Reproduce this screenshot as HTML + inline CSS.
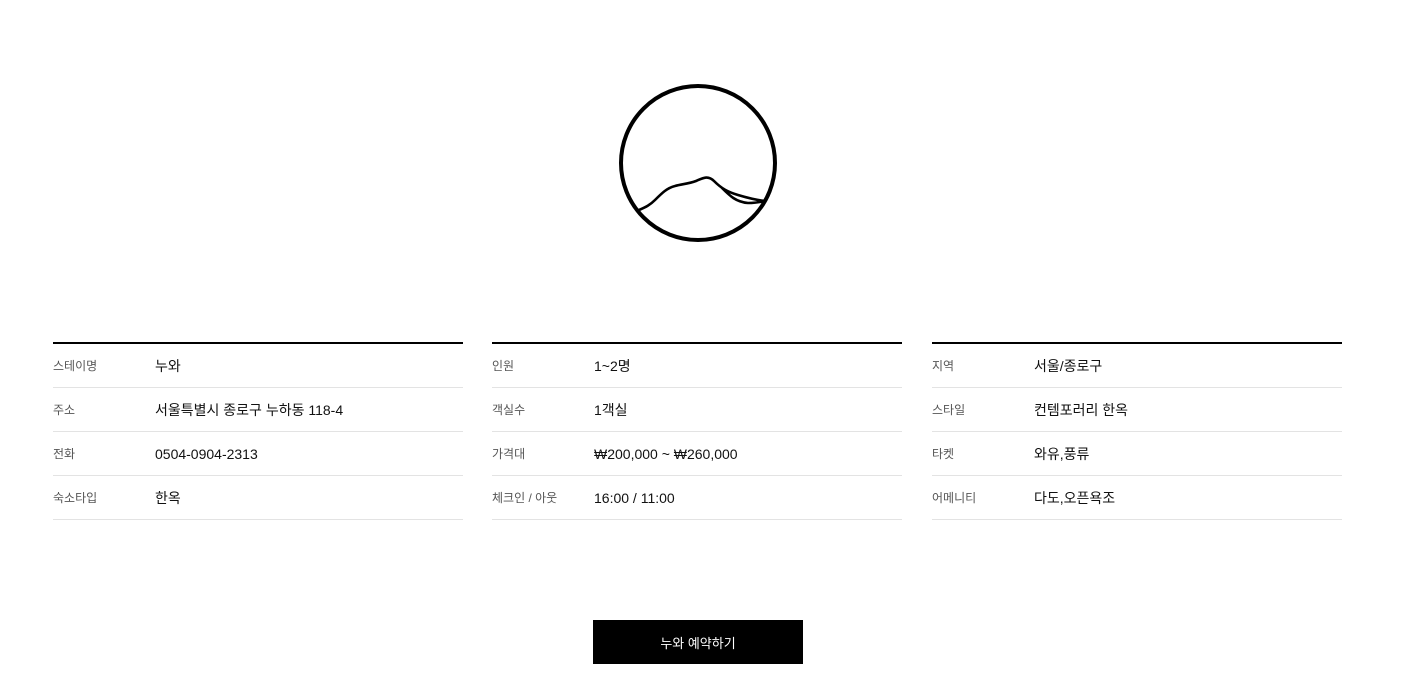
<!DOCTYPE html>
<html><head><meta charset="utf-8"><style>
body{margin:0;background:#fff;width:1415px;height:694px;overflow:hidden;font-family:"Liberation Sans","Noto Sans CJK KR",sans-serif;}
.col{position:absolute;top:342px;width:410px;border-top:2px solid #000;}
.row{height:43px;border-bottom:1px solid #e3e3e3;display:flex;align-items:center;}
.l{width:102px;font-size:12px;color:#555;line-height:16px;}
.v{font-size:14px;color:#111;line-height:18px;}
.btn{position:absolute;left:593px;top:620px;width:210px;height:44px;background:#000;color:#fff;font-size:13px;display:flex;align-items:center;justify-content:center;}
</style></head><body>
<svg style="position:absolute;left:0;top:0" width="1415" height="300">
<circle cx="698" cy="163" r="77" fill="none" stroke="#000" stroke-width="4"/>
<path d="M639 210 C646 207 650 205 655 200 C662 193 667 188 675 186 C682 184 688 184 696 181 C703 178 708 175 714 181 C722 189 728 192 738 195 C748 198 756 200 765 201 M722 188 C730 196 736 202 748 203 C756 203 760 202 765 201" fill="none" stroke="#000" stroke-width="2.6" stroke-linecap="round"/>
</svg>
<div class="col" style="left:53px">
<div class="row"><span class="l">스테이명</span><span class="v">누와</span></div>
<div class="row"><span class="l">주소</span><span class="v">서울특별시 종로구 누하동 118-4</span></div>
<div class="row"><span class="l">전화</span><span class="v">0504-0904-2313</span></div>
<div class="row"><span class="l">숙소타입</span><span class="v">한옥</span></div>
</div>
<div class="col" style="left:492px">
<div class="row"><span class="l">인원</span><span class="v">1~2명</span></div>
<div class="row"><span class="l">객실수</span><span class="v">1객실</span></div>
<div class="row"><span class="l">가격대</span><span class="v">₩200,000 ~ ₩260,000</span></div>
<div class="row"><span class="l">체크인 / 아웃</span><span class="v">16:00 / 11:00</span></div>
</div>
<div class="col" style="left:932px">
<div class="row"><span class="l">지역</span><span class="v">서울/종로구</span></div>
<div class="row"><span class="l">스타일</span><span class="v">컨템포러리 한옥</span></div>
<div class="row"><span class="l">타켓</span><span class="v">와유,풍류</span></div>
<div class="row"><span class="l">어메니티</span><span class="v">다도,오픈욕조</span></div>
</div>
<div class="btn">누와 예약하기</div>
</body></html>
